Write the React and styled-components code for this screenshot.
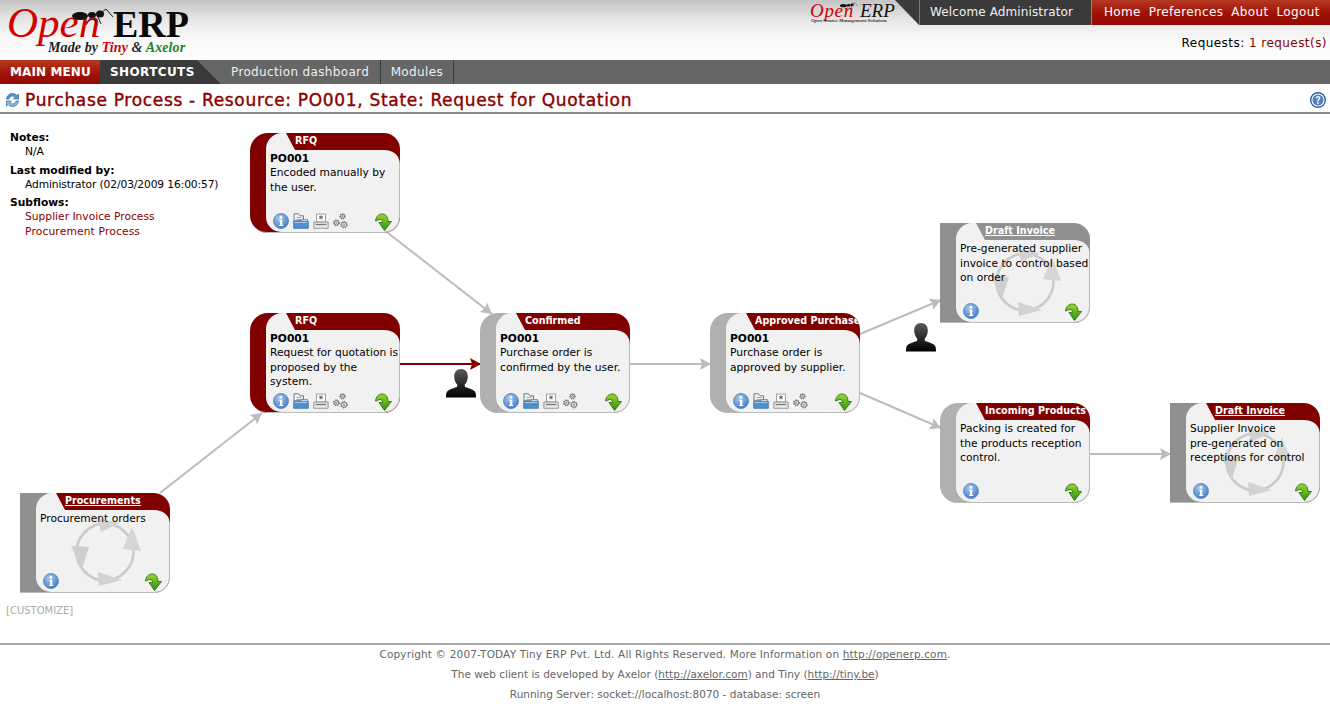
import React from 'react';
import styled, { createGlobalStyle } from 'styled-components';

const GlobalStyle = createGlobalStyle`
  html, body {
    margin: 0;
    padding: 0;
    background: #fff;
    font-family: "DejaVu Sans", Verdana, sans-serif;
    font-size: 10.7px;
    color: #000;
  }
  a { color: inherit; text-decoration: none; }
`;

const Page = styled.div`
  width: 1330px;
  height: 704px;
  overflow: hidden;
  display: flex;
  flex-direction: column;
`;

const Header = styled.header`
  height: 60px;
  flex: none;
  display: flex;
  justify-content: space-between;
  background: linear-gradient(#c4c4c4 0, #e6e6e6 20px, #f8f8f8 38px, #fff 60px);
`;

const Logo = styled.div`
  position: relative;
  width: 200px;
  height: 60px;
  font-family: "Liberation Serif", serif;
`;

const LogoOpen = styled.span`
  position: absolute;
  left: 7px;
  top: 6px;
  font-size: 43px;
  line-height: 33px;
  font-style: italic;
  color: #d40000;
`;

const LogoErp = styled.span`
  position: absolute;
  left: 113px;
  top: 9px;
  font-size: 38px;
  line-height: 30px;
  font-weight: 700;
  color: #0a0a0a;
`;

const LogoTag = styled.span`
  position: absolute;
  left: 48px;
  top: 41px;
  font-size: 14px;
  line-height: 13px;
  font-weight: 700;
  font-style: italic;
  letter-spacing: 0.1px;
  color: #222;
  white-space: nowrap;
`;

const TagTiny = styled.span`color: #d40000;`;
const TagAxelor = styled.span`color: #17851c;`;

const AntSvg = styled.svg`
  position: absolute;
  left: ${(p) => p.$x}px;
  top: ${(p) => p.$y}px;
`;

const HeaderRight = styled.div`
  display: flex;
  flex-direction: column;
  align-items: flex-end;
`;

const TopRow = styled.div`
  display: flex;
  height: 25px;
`;

const SmallLogo = styled.div`
  position: relative;
  width: 85px;
  height: 25px;
  font-family: "Liberation Serif", serif;
  font-style: italic;
`;

const SmallOpen = styled.span`
  position: absolute;
  left: 0;
  top: 0;
  font-size: 19px;
  line-height: 21px;
  letter-spacing: 0.7px;
  color: #d40000;
`;

const SmallErp = styled.span`
  position: absolute;
  left: 50px;
  top: 0;
  font-size: 19px;
  line-height: 21px;
  color: #111;
`;

const SmallTag = styled.span`
  position: absolute;
  left: 1px;
  top: 18px;
  font-size: 5px;
  line-height: 6px;
  font-weight: 700;
  color: #333;
  white-space: nowrap;
`;

const WelcomeTab = styled.div`
  width: 172px;
  margin-left: 24px;
  position: relative;
  background: #3a3a3a;
  color: #f0f0f0;
  font-size: 12px;
  line-height: 25px;
  padding-left: 10px;
  box-sizing: border-box;
  letter-spacing: 0.12px;
  border-left: 1px solid #777;

  &::before {
    content: "";
    position: absolute;
    left: -25px;
    top: 0;
    width: 24px;
    height: 25px;
    background: #3a3a3a;
    clip-path: polygon(0 0, 100% 0, 100% 100%);
  }
`;

const TopLinks = styled.nav`
  width: 239px;
  box-sizing: border-box;
  padding-left: 12px;
  display: flex;
  gap: 8px;
  background: linear-gradient(#b53a22, #a01006 55%, #920a02);
  border-left: 1px solid #888;
  color: #fff;
  font-size: 12px;
  line-height: 25px;
  letter-spacing: 0.35px;
`;

const Requests = styled.div`
  margin-top: 10px;
  padding-right: 3px;
  font-size: 12px;
  line-height: 16px;
  letter-spacing: 0.45px;
`;

const RequestLink = styled.a`color: #8b0000;`;

const MenuBar = styled.nav`
  height: 24px;
  flex: none;
  display: flex;
  align-items: stretch;
  background: #666;
  color: #fff;
  font-size: 12px;
  line-height: 24px;
`;

const MainMenu = styled.div`
  width: 100px;
  box-sizing: border-box;
  padding-left: 10px;
  font-weight: 700;
  background: linear-gradient(#b8391f, #a01006 60%, #920a02);
  letter-spacing: 0.1px;
`;

const Shortcuts = styled.div`
  width: 121px;
  box-sizing: border-box;
  padding-left: 10px;
  font-weight: 700;
  letter-spacing: 0.4px;
  background: #3a3a3a;
  clip-path: polygon(0 0, 97px 0, 100% 100%, 0 100%);
`;

const MenuItem = styled.a`
  padding: 0 10.5px 0 10px;
  color: #eee;
  border-right: 1px solid #3a3a3a;
  letter-spacing: 0.35px;
`;

const TitleBar = styled.div`
  height: 30px;
  flex: none;
  box-sizing: border-box;
  display: flex;
  align-items: center;
  padding: 3px 4px 0 5px;
  gap: 5px;
  border-bottom: 2px solid #8a8a8a;
`;

const Title = styled.h1`
  margin: 0;
  flex: 1;
  font-size: 17px;
  font-weight: 400;
  color: #8b0000;
  -webkit-text-stroke: 0.4px #8b0000;
  letter-spacing: 0.68px;
  white-space: nowrap;
`;

const Main = styled.main`
  position: relative;
  flex: 1;
  display: flex;
  flex-direction: column;
  justify-content: space-between;
  padding: 17px 0 26px 6px;
  box-sizing: border-box;
`;

const Sidebar = styled.div`
  padding-left: 4px;
  display: flex;
  flex-direction: column;
  gap: 4.5px;
  line-height: 14px;
`;

const NoteLabel = styled.div`font-weight: 700;`;

const NoteValue = styled.div`
  padding-left: 15px;
  letter-spacing: ${(p) => p.$spacing || 0}px;
`;

const SubflowLink = styled.a`
  display: block;
  padding-left: 15px;
  color: #8b0000;
  line-height: 15px;
  letter-spacing: ${(p) => p.$spacing || 0}px;
  &:nth-child(2) { margin-top: -1px; }
`;

const Customize = styled.a`
  font-size: 10px;
  line-height: 12px;
  color: #aaa;
`;

const Canvas = styled.div`
  position: absolute;
  left: 0;
  top: 0;
  width: 1330px;
  height: 530px;
`;

const EdgeLayer = styled.svg`
  position: absolute;
  left: 0;
  top: 0;
`;

const NodeBox = styled.div`
  position: absolute;
  left: ${(p) => p.$x}px;
  top: ${(p) => p.$y}px;
  width: 150px;
  height: 100px;
  background: ${(p) => p.$side};
  border-radius: ${(p) => (p.$round ? '18px' : '0')} 16px 16px ${(p) => (p.$round ? '18px' : '0')};
  overflow: hidden;
  box-shadow: inset -1px -1px 0 #bbb;
`;

const Panel = styled.div`
  position: absolute;
  left: 16px;
  top: 0;
  width: 133px;
  height: 99px;
  box-sizing: border-box;
  padding: 19px 0 1px 4px;
  display: flex;
  flex-direction: column;
  background: #f1f1f1;
  border-radius: 16px 0 15px 15px;
`;

const Tab = styled.div`
  position: absolute;
  left: 36px;
  top: 0;
  width: 114px;
  height: 30px;
  background: ${(p) => p.$color};
  clip-path: path('M0 0 L9 17 L98 17 C107 17 113 22 114 30 L114 16 C114 7 107 0 98 0 Z');
`;

const TabLabel = styled.a`
  position: absolute;
  left: 45px;
  top: 1px;
  font-size: 9.6px;
  line-height: 14px;
  font-weight: 700;
  color: #fff;
  white-space: nowrap;
  text-decoration: ${(p) => (p.$link ? 'underline' : 'none')};
`;

const NodeTitle = styled.div`
  position: relative;
  font-weight: 700;
  line-height: 14px;
`;

const NodeText = styled.div`
  position: relative;
  white-space: pre;
  line-height: 14.7px;
`;

const NodeFooter = styled.div`
  position: relative;
  margin-top: auto;
  padding: 0 7px 0 3px;
  display: flex;
  align-items: flex-start;
  gap: 4px;
`;

const NextIcon = styled.span`
  margin-left: auto;
  height: 18px;
`;

const CycleSvg = styled.svg`
  position: absolute;
  left: 34px;
  top: 22px;
`;

const UserSvg = styled.svg`
  position: absolute;
  left: ${(p) => p.$x}px;
  top: ${(p) => p.$y}px;
`;

const Footer = styled.footer`
  height: 61px;
  flex: none;
  box-sizing: border-box;
  border-top: 2px solid #a8a8a8;
  text-align: center;
  font-size: 10.5px;
  line-height: 20px;
  color: #666;
`;

const FooterLine = styled.div`
  letter-spacing: ${(p) => p.$spacing || 0}px;
  &:first-child { margin-top: -1px; }
`;

const FooterLink = styled.a`
  text-decoration: underline;
`;

const InfoIcon = () => (
  <svg width="16" height="16" viewBox="0 0 16 16">
    <defs>
      <radialGradient id="infoFill" cx="0.4" cy="0.3" r="0.8">
        <stop offset="0" stopColor="#a9c8ea" />
        <stop offset="1" stopColor="#3d76bd" />
      </radialGradient>
    </defs>
    <circle cx="8" cy="8" r="7.5" fill="url(#infoFill)" stroke="#4a7fbe" strokeWidth="0.8" />
    <circle cx="8" cy="4.4" r="1.4" fill="#fff" />
    <path d="M6.3 6.8h3v5.2h1v1.1H6.1V12h1V7.9h-.8z" fill="#fff" />
  </svg>
);

const FolderIcon = () => (
  <svg width="16" height="16" viewBox="0 0 16 16">
    <path d="M1 .8h4.500l1.500 2h3.500v5H1z" fill="#eef2f6" stroke="#5f6f80" strokeWidth="0.9" />
    <path d="M3.500 4.500h5M3.500 6.500h5" stroke="#8b98a6" strokeWidth="0.8" />
    <path d="M.7 15.300V8.200h14.600v7.100z" fill="#4f8fd0" stroke="#3a6ea5" strokeWidth="0.8" />
    <path d="M1.500 9.500h13" stroke="#a6cbec" strokeWidth="1" />
    <path d="M8 6.500h6.500v2H8z" fill="#c5dcf2" stroke="#3a6ea5" strokeWidth="0.6" />
  </svg>
);

const PrintIcon = () => (
  <svg width="16" height="16" viewBox="0 0 16 16">
    <path d="M3.500 1h9v8h-9z" fill="#fbfbfb" stroke="#8c8c8c" strokeWidth="0.8" />
    <path d="M8 2.400v4M6.200 3.400l3.600 2M9.800 3.400l-3.600 2" stroke="#555" strokeWidth="0.9" />
    <path d="M.8 9h14.400v6.300H.8z" fill="#d8d8d8" stroke="#8c8c8c" strokeWidth="0.8" />
    <path d="M3 11.500h10" stroke="#777" strokeWidth="1" />
    <path d="M1.500 13.800h13" stroke="#f4f4f4" strokeWidth="0.8" />
  </svg>
);

const Gear = ({ cx, cy, r }) => (
  <g>
    <circle cx={cx} cy={cy} r={r} fill="#fafafa" stroke="#666" strokeWidth="0.9" />
    <circle cx={cx} cy={cy} r={r + 0.7} fill="none" stroke="#666" strokeWidth="1" strokeDasharray="1.2 1.3" />
    <circle cx={cx} cy={cy} r={r * 0.35} fill="#fff" stroke="#666" strokeWidth="0.7" />
  </g>
);

const GearsIcon = () => (
  <svg width="16" height="16" viewBox="0 0 16 16">
    <Gear cx={9.500} cy={3.300} r={2.100} />
    <Gear cx={3.400} cy={9.800} r={2.300} />
    <Gear cx={11} cy={11.700} r={2.600} />
  </svg>
);

const NextArrow = () => (
  <svg width="17" height="18" viewBox="0 0 17 18">
    <defs>
      <linearGradient id="nextFill" x1="0" y1="0" x2="0" y2="1">
        <stop offset="0" stopColor="#9ad62e" />
        <stop offset="1" stopColor="#2f8f10" />
      </linearGradient>
    </defs>
    <path
      d="M.5 8C1 3 4.500.5 8 1c3.500.5 5 3.500 5 7.500h3.500l-7 9-5.500-8h3.500c0-2-1-3-2.500-3S2 8 .5 8z"
      fill="url(#nextFill)"
      stroke="#1f6a0a"
      strokeWidth="0.8"
      strokeLinejoin="round"
    />
  </svg>
);

const CycleIcon = () => (
  <CycleSvg width="72" height="72" viewBox="0 0 72 72">
    <circle cx="35" cy="37" r="28" fill="none" stroke="#cccccc" strokeWidth="3.500" />
    <circle cx="35" cy="37" r="26.500" fill="none" stroke="#fafafa" strokeWidth="1" />
    <path d="M28 4l22 4-19 9z" fill="#d2d2d2" />
    <path d="M71 36l-18-2 9-22z" fill="#d6d6d6" />
    <path d="M28 57l24 8-23 6z" fill="#d2d2d2" />
    <path d="M1 31l18 1-7 22z" fill="#cfcfcf" />
  </CycleSvg>
);

const UserIcon = ({ x, y }) => (
  <UserSvg $x={x} $y={y} width="32" height="32" viewBox="0 0 32 32">
    <defs>
      <linearGradient id="userFill" x1="0" y1="0" x2="0" y2="1">
        <stop offset="0" stopColor="#5a5a5a" />
        <stop offset="0.6" stopColor="#222" />
        <stop offset="1" stopColor="#000" />
      </linearGradient>
    </defs>
    <path
      d="M16 1c4.600 0 6.800 3.400 6.800 7.400 0 3.300-1.200 6.200-3 8v2.400c2 1 7.200 2.200 9.800 4.400 1.200 1 1.400 3.300 1.400 6.300H1c0-3 .2-5.300 1.400-6.300 2.600-2.200 7.800-3.400 9.800-4.400v-2.400c-1.800-1.800-3-4.700-3-8C9.200 4.400 11.400 1 16 1z"
      fill="url(#userFill)"
    />
  </UserSvg>
);

const Ant = ({ x, y, w, h }) => (
  <AntSvg $x={x} $y={y} width={w} height={h} viewBox="0 0 42 20">
    <ellipse cx="8" cy="8" rx="8" ry="4" fill="#111" />
    <ellipse cx="20" cy="7" rx="4" ry="3" fill="#111" />
    <ellipse cx="28" cy="6" rx="4" ry="3.500" fill="#111" />
    <path d="M30 4l4-3 7 8M19 9l-5 8M22 9l3 8M26 9l3 7" fill="none" stroke="#222" strokeWidth="1" />
  </AntSvg>
);

const RefreshIcon = () => (
  <svg width="15" height="16" viewBox="0 0 15 16">
    <path d="M1.500 7C2 3.500 4.500 1.500 7.500 1.500c2 0 3.300.8 4.300 2l1.700-1.500v5H8.600l1.600-1.700c-.7-.8-1.600-1.200-2.700-1.200C5.600 4.100 4.300 5.300 3.900 7z" fill="#5b93cf" stroke="#2f659e" strokeWidth="0.7" />
    <path d="M13.500 9c-.5 3.500-3 5.500-6 5.500-2 0-3.300-.8-4.300-2L1.500 14V9h4.900l-1.600 1.700c.7.800 1.600 1.200 2.700 1.200 1.900 0 3.200-1.200 3.600-2.900z" fill="#8db9e4" stroke="#2f659e" strokeWidth="0.7" />
  </svg>
);

const HelpIcon = () => (
  <svg width="16" height="16" viewBox="0 0 16 16">
    <circle cx="8" cy="8" r="7.300" fill="#fff" stroke="#2f62a8" strokeWidth="1.400" />
    <circle cx="8" cy="8" r="5.500" fill="#4f80bf" />
    <path d="M5.700 6.200C5.900 4.800 6.800 4 8.100 4c1.400 0 2.300.9 2.300 2 0 1.800-1.800 1.800-1.800 3.400H7.200C7.200 7.300 8.900 7.100 8.900 6c0-.5-.3-.8-.8-.8-.6 0-.9.4-1 1z" fill="#fff" />
    <rect x="7.100" y="10.200" width="1.600" height="1.600" fill="#fff" />
  </svg>
);

const RED = '#800000';
const DARK_GREY = '#909090';
const GREY = '#b0b0b0';

const NODES = [
  { x: 250, y: 19, side: RED, round: true, tab: RED, label: 'RFQ', title: 'PO001', text: 'Encoded manually by\nthe user.', actions: true },
  { x: 250, y: 199, side: RED, round: true, tab: RED, label: 'RFQ', title: 'PO001', text: 'Request for quotation is\nproposed by the\nsystem.', actions: true },
  { x: 480, y: 199, side: GREY, round: true, tab: RED, label: 'Confirmed', title: 'PO001', text: 'Purchase order is\nconfirmed by the user.', actions: true },
  { x: 710, y: 199, side: GREY, round: true, tab: RED, label: 'Approved Purchase', title: 'PO001', text: 'Purchase order is\napproved by supplier.', actions: true },
  { x: 940, y: 109, side: DARK_GREY, tab: DARK_GREY, label: 'Draft Invoice', link: true, cycle: true, text: 'Pre-generated supplier\ninvoice to control based\non order' },
  { x: 940, y: 289, side: GREY, round: true, tab: RED, label: 'Incoming Products', text: 'Packing is created for\nthe products reception\ncontrol.' },
  { x: 1170, y: 289, side: DARK_GREY, tab: RED, label: 'Draft Invoice', link: true, cycle: true, text: 'Supplier Invoice\npre-generated on\nreceptions for control' },
  { x: 20, y: 379, side: DARK_GREY, tab: RED, label: 'Procurements', link: true, cycle: true, text: 'Procurement orders' },
];

const EDGES = [
  { from: [388, 119], to: [492, 200] },
  { from: [160, 379], to: [262, 299] },
  { from: [400, 250], to: [481, 250], color: RED },
  { from: [630, 250], to: [711, 250] },
  { from: [860, 220], to: [941, 186] },
  { from: [860, 279], to: [941, 314] },
  { from: [1090, 340], to: [1171, 340] },
];

const Edge = ({ from, to, color = '#bcbcbc' }) => {
  const angle = (Math.atan2(to[1] - from[1], to[0] - from[0]) * 180) / Math.PI;
  return (
    <g>
      <line x1={from[0]} y1={from[1]} x2={to[0]} y2={to[1]} stroke={color} strokeWidth="2" />
      <path d="M0 0L-11 -6L-9 0L-11 6Z" fill={color} transform={`translate(${to[0]} ${to[1]}) rotate(${angle})`} />
    </g>
  );
};

const Node = ({ node }) => (
  <NodeBox $x={node.x} $y={node.y} $side={node.side} $round={node.round}>
    <Panel>
      {node.cycle && <CycleIcon />}
      {node.title && <NodeTitle>{node.title}</NodeTitle>}
      <NodeText>{node.text}</NodeText>
      <NodeFooter>
        <InfoIcon />
        {node.actions && <FolderIcon />}
        {node.actions && <PrintIcon />}
        {node.actions && <GearsIcon />}
        <NextIcon><NextArrow /></NextIcon>
      </NodeFooter>
    </Panel>
    <Tab $color={node.tab} />
    <TabLabel $link={node.link}>{node.label}</TabLabel>
  </NodeBox>
);

export default function App() {
  return (
    <Page>
      <GlobalStyle />
      <Header>
        <Logo>
          <LogoOpen>Open</LogoOpen>
          <LogoErp>ERP</LogoErp>
          <Ant x={72} y={8} w={42} h={20} />
          <LogoTag>Made by <TagTiny>Tiny</TagTiny> &amp; <TagAxelor>Axelor</TagAxelor></LogoTag>
        </Logo>
        <HeaderRight>
          <TopRow>
            <SmallLogo>
              <SmallOpen>Open</SmallOpen>
              <SmallErp>ERP</SmallErp>
              <Ant x={30} y={2} w={18} h={9} />
              <SmallTag>Open Source Management Solutions</SmallTag>
            </SmallLogo>
            <WelcomeTab>Welcome Administrator</WelcomeTab>
            <TopLinks>
              <a>Home</a>
              <a>Preferences</a>
              <a>About</a>
              <a>Logout</a>
            </TopLinks>
          </TopRow>
          <Requests>Requests: <RequestLink>1 request(s)</RequestLink></Requests>
        </HeaderRight>
      </Header>
      <MenuBar>
        <MainMenu>MAIN MENU</MainMenu>
        <Shortcuts>SHORTCUTS</Shortcuts>
        <MenuItem>Production dashboard</MenuItem>
        <MenuItem>Modules</MenuItem>
      </MenuBar>
      <TitleBar>
        <RefreshIcon />
        <Title>Purchase Process - Resource: PO001, State: Request for Quotation</Title>
        <HelpIcon />
      </TitleBar>
      <Main>
        <Sidebar>
          <div>
            <NoteLabel>Notes:</NoteLabel>
            <NoteValue>N/A</NoteValue>
          </div>
          <div>
            <NoteLabel>Last modified by:</NoteLabel>
            <NoteValue $spacing={-0.12}>Administrator (02/03/2009 16:00:57)</NoteValue>
          </div>
          <div>
            <NoteLabel>Subflows:</NoteLabel>
            <SubflowLink>Supplier Invoice Process</SubflowLink>
            <SubflowLink $spacing={0.15}>Procurement Process</SubflowLink>
          </div>
        </Sidebar>
        <Customize>[CUSTOMIZE]</Customize>
        <Canvas>
          <EdgeLayer width="1330" height="530">
            {EDGES.map((edge, i) => <Edge key={i} {...edge} />)}
          </EdgeLayer>
          {NODES.map((node, i) => <Node key={i} node={node} />)}
          <UserIcon x={445} y={254} />
          <UserIcon x={905} y={208} />
        </Canvas>
      </Main>
      <Footer>
        <FooterLine $spacing={0.155}>Copyright © 2007-TODAY Tiny ERP Pvt. Ltd. All Rights Reserved. More Information on <FooterLink>http://openerp.com</FooterLink>.</FooterLine>
        <FooterLine>The web client is developed by Axelor (<FooterLink>http://axelor.com</FooterLink>) and Tiny (<FooterLink>http://tiny.be</FooterLink>)</FooterLine>
        <FooterLine>Running Server: socket://localhost:8070 - database: screen</FooterLine>
      </Footer>
    </Page>
  );
}
